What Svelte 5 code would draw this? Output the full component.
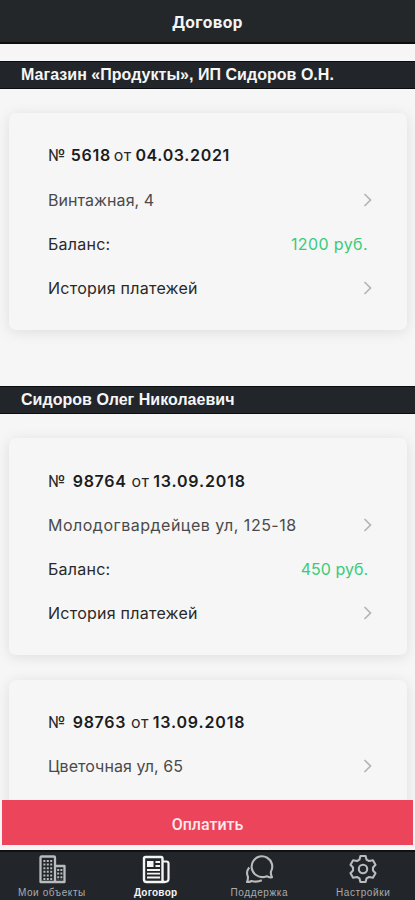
<script>
  const groups = [
    {
      owner: 'Магазин «Продукты», ИП Сидоров О.Н.',
      contracts: [
        { number: '5618', date: '04.03.2021', address: 'Винтажная, 4', balance: 1200, tight: true }
      ]
    },
    {
      owner: 'Сидоров Олег Николаевич',
      contracts: [
        { number: '98764', date: '13.09.2018', address: 'Молодогвардейцев ул, 125-18', balance: 450 },
        { number: '98763', date: '13.09.2018', address: 'Цветочная ул, 65' }
      ]
    }
  ]
  const tabs = [
    { id: 'objects', label: 'Мои объекты' },
    { id: 'contract', label: 'Договор' },
    { id: 'support', label: 'Поддержка' },
    { id: 'settings', label: 'Настройки' }
  ]
  let active = $state('contract')
</script>

{#snippet chevron()}
  <svg class="chevron" width="10" height="16" viewBox="0 0 10 16">
    <path d="M1.5 2 L7.5 8 L1.5 14" />
  </svg>
{/snippet}

<main>
  <header>Договор</header>

  <div class="content">
    {#each groups as g}
      <section>
        <h2>{g.owner}</h2>
        <div class="cards">
          {#each g.contracts as c}
            <article>
              <div class="row title" class:tight={c.tight}>
                <span>№</span><b>{c.number}</b><span>от</span><b class="date">{c.date}</b>
              </div>
              <div class="row address" class:long={c.address.length > 20}>
                <span>{c.address}</span>{@render chevron()}
              </div>
              {#if c.balance}
                <div class="row">
                  <span>Баланс:</span>
                  <span class="sum" class:wide={c.balance >= 1000}>{c.balance} руб.</span>
                </div>
                <div class="row"><span>История платежей</span>{@render chevron()}</div>
              {/if}
            </article>
          {/each}
        </div>
      </section>
    {/each}
  </div>

  <div class="pay"><button>Оплатить</button></div>

  <nav>
    {#each tabs as t}
      <button class="tab" class:active={active == t.id} onclick={() => active = t.id}>
        <svg width="30" height="30" viewBox="0 0 30 30">
          {#if t.id == 'objects'}
            <path d="M3.5 28 V3.5 Q3.5 2.5 4.5 2.5 H17 Q18 2.5 18 3.5 V28 Z M18 12 H27.5 V28 H18" stroke-width="2.3" />
            <path d="M7.4 6 V26 M10.8 6 V26 M14.2 6 V26" stroke-width="2" stroke-dasharray="2 1.6" />
            <path d="M21.2 15 V26 M24.4 15 V26" stroke-width="2" stroke-dasharray="2 1.6" />
          {:else if t.id == 'contract'}
            <path d="M4.5 3 H20 Q21.5 3 21.5 4.5 V26 Q21.5 28 23.5 28 H5.5 Q3 28 3 25.5 V4.5 Q3 3 4.5 3 Z" stroke-width="2.4" />
            <path d="M22 7.5 H25.5 Q27.5 7.5 27.5 9.5 V25 Q27.5 28 23.5 28" stroke-width="2.2" />
            <rect class="fill" x="6" y="7" width="6.5" height="6" />
            <path d="M14.5 8 H19 M14.5 12 H19 M6 16 H19 M6 19.7 H19 M6 23.5 H19" stroke-width="1.8" />
          {:else if t.id == 'support'}
            <path d="M12 21 A10.3 10.3 0 1 1 27 17.5 Q26.4 20 28 23.2 Q25 23.8 22.8 22.2 Q17 24.6 12 21 Z" />
            <path d="M5.2 13.5 Q1.6 18 4 23 Q4 26 3 28 Q5.5 28.2 7.5 27 Q13 28.6 17.8 26.3" />
          {:else}
            <path d="M12.4 2 H17.6 L18.5 5.6 L21 7 L24.9 6.2 L27.5 10.7 L25 13.5 V16.5 L27.5 19.3 L24.9 23.8 L21 23 L18.5 24.4 L17.6 28 H12.4 L11.5 24.4 L9 23 L5.1 23.8 L2.5 19.3 L5 16.5 V13.5 L2.5 10.7 L5.1 6.2 L9 7 L11.5 5.6 Z" />
            <circle cx="15" cy="15" r="4.2" />
          {/if}
        </svg>
        <span>{t.label}</span>
      </button>
    {/each}
  </nav>
</main>

<style>
  :global(body) {
    background: #f6f6f6;
  }
  main {
    display: flex;
    flex-direction: column;
    height: 900px;
    overflow: hidden;
    font-family: Inter, "Liberation Sans", sans-serif;
    background: #f6f6f6;
  }
  header {
    flex: none;
    height: 44px;
    box-sizing: border-box;
    border-bottom: 2px solid #0c0e10;
    background: #23272a;
    color: #f4f4f4;
    font: bold 17px/45px Roboto, sans-serif;
    letter-spacing: 0.4px;
    text-align: center;
  }
  .content {
    flex: 1;
    min-height: 0;
    overflow: hidden;
    padding-top: 17px;
  }
  section {
    margin-bottom: 56px;
  }
  h2 {
    height: 28px;
    box-sizing: border-box;
    margin: 0;
    padding-left: 21px;
    border: solid #0b0e11;
    border-width: 1px 0;
    background: #22262a;
    color: #f6f6f6;
    font: bold 16px/26px "Liberation Sans", sans-serif;
    letter-spacing: 0.03px;
    white-space: nowrap;
  }
  .cards {
    display: flex;
    flex-direction: column;
    gap: 25px;
    padding: 24px 8px 0 9px;
  }
  article {
    height: 217px;
    box-sizing: border-box;
    padding: 20px 39px;
    border-radius: 7px;
    background: #f6f6f6;
    box-shadow: 0 2px 14px rgba(0, 0, 0, 0.1);
  }
  .row {
    display: flex;
    align-items: center;
    justify-content: space-between;
    height: 44px;
    padding-top: 1px;
    box-sizing: border-box;
    color: #292929;
    font-size: 16px;
    letter-spacing: 0.25px;
    white-space: nowrap;
  }
  .address {
    color: #4a4a4a;
    letter-spacing: 0.05px;
  }
  .long {
    letter-spacing: 0.5px;
  }
  article:nth-child(2) .row {
    padding-top: 0;
  }
  .title {
    justify-content: flex-start;
    gap: 5px;
  }
  .title b {
    margin-left: 2px;
    color: #1c1c1c;
    font-weight: 600;
    letter-spacing: 0.7px;
  }
  .title .date {
    margin-left: -1px;
    letter-spacing: 0.85px;
  }
  .tight {
    gap: 3px;
    padding-top: 0;
  }
  .tight .date {
    margin-left: 1px;
    letter-spacing: 0.65px;
  }
  .sum {
    color: #3acb78;
    letter-spacing: 0;
  }
  .wide {
    letter-spacing: 0.4px;
  }
  .chevron {
    margin-right: -5px;
    fill: none;
    stroke: #b4b4b4;
    stroke-width: 1.7;
  }
  .pay {
    flex: none;
    height: 50px;
    box-sizing: border-box;
    padding: 0 2px;
    background: #f8f4f5;
  }
  .pay button {
    display: block;
    width: 100%;
    height: 45px;
    padding: 3px 0 0;
    border: 0;
    background: #ec445b;
    color: #fbe9ec;
    font: 500 16px Roboto, sans-serif;
  }
  nav {
    flex: none;
    display: grid;
    grid-template-columns: repeat(4, 1fr);
    height: 50px;
    box-sizing: border-box;
    border-top: 2px solid #0e1113;
    background: #22262a;
  }
  .tab {
    display: flex;
    flex-direction: column;
    align-items: center;
    gap: 3px;
    padding: 2px 0 0;
    border: 0;
    background: none;
    color: #a9abac;
    font: 10px/12px "Liberation Sans", sans-serif;
    letter-spacing: 0.6px;
  }
  .tab svg {
    fill: none;
    stroke: #b9bbbc;
    stroke-width: 2.1;
    stroke-linejoin: round;
    stroke-linecap: butt;
  }
  .tab .fill {
    fill: #f4f4f4;
    stroke: none;
  }
  .tab.active {
    color: #f4f4f4;
    font-weight: bold;
    letter-spacing: 0.25px;
  }
  .tab.active svg {
    stroke: #f4f4f4;
  }
</style>
